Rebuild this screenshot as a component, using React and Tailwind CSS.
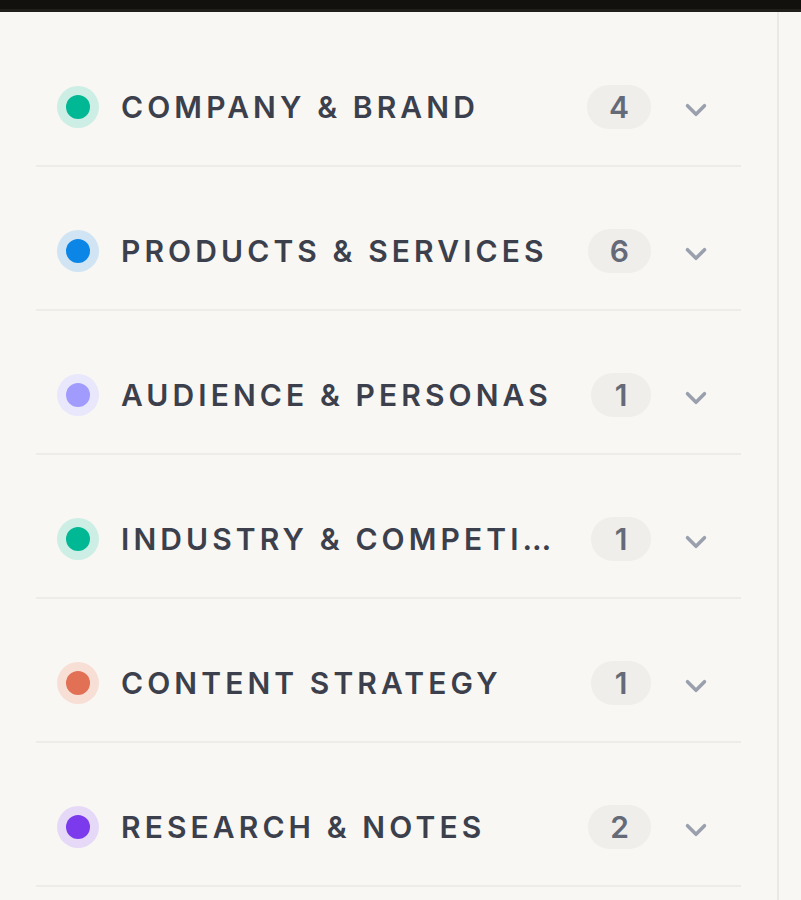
import { ChevronDown } from 'lucide-react';

const sections = [
  { name: 'Company & Brand', count: 4, dot: 'bg-[#00b894]', ring: 'bg-[#cdeee4]' },
  { name: 'Products & Services', count: 6, dot: 'bg-[#0b85e6]', ring: 'bg-[#d0e4f3]' },
  { name: 'Audience & Personas', count: 1, dot: 'bg-[#a29bfe]', ring: 'bg-[#e9e7fb]' },
  { name: 'Industry & Competitors', count: 1, dot: 'bg-[#00b894]', ring: 'bg-[#cdeee4]' },
  { name: 'Content Strategy', count: 1, dot: 'bg-[#e17055]', ring: 'bg-[#f8dfd6]' },
  { name: 'Research & Notes', count: 2, dot: 'bg-[#7c3aed]', ring: 'bg-[#e6d9f8]' },
];

const App = () => {
  return (
    <div className="w-[801px] h-[900px] overflow-hidden bg-[#f8f7f3] flex flex-col" style={{ fontFamily: 'Inter, "Noto Sans", sans-serif' }}>
      <div className="h-[9px] bg-[#12110d]" />
      <div className="h-[3px] bg-[#211f1a]" />
      <div className="flex flex-1 min-h-0">
        <div className="w-[779px] border-r-2 border-[#ebe9e5] pl-[36px] pr-[36px] pt-[11px]">
          {sections.map((s) => (
            <div key={s.name} className="h-[144px] border-b-2 border-[#eeece8] pt-[26px] flex items-center pl-[21px] pr-[28px]">
              <div className={`w-[42px] h-[42px] rounded-full flex items-center justify-center shrink-0 ${s.ring}`}>
                <div className={`w-[24px] h-[24px] rounded-full ${s.dot}`} />
              </div>
              <div className="ml-[22px] flex-1 min-w-0 truncate uppercase text-[30px] font-semibold tracking-[4.1px] text-[#3b404c]">
                {s.name}
              </div>
              <div className="ml-[36px] h-[44px] min-w-[60px] px-[22px] rounded-full bg-[#efeeea] flex items-center justify-center text-[30px] font-semibold text-[#646a78]">
                {s.count}
              </div>
              <ChevronDown size={34} strokeWidth={2.5} className="ml-[28px] mt-[6px] text-[#9aa0ad] shrink-0" />
            </div>
          ))}
        </div>
      </div>
    </div>
  );
};

export default App;
